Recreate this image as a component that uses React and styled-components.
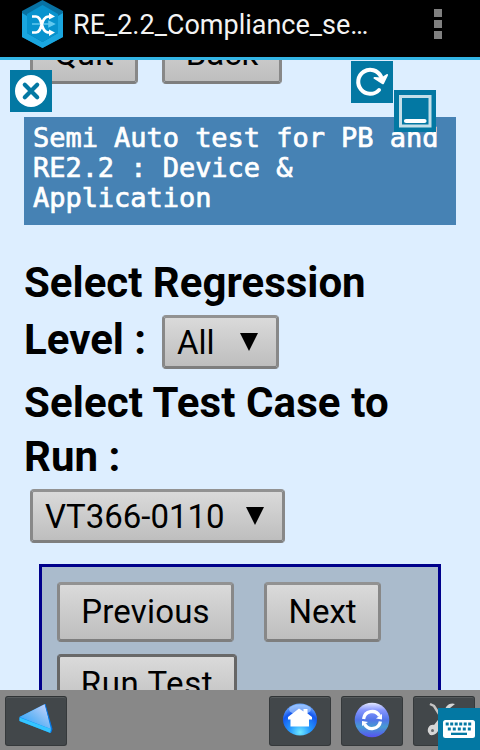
import React from 'react';
import styled, { createGlobalStyle } from 'styled-components';

const GlobalStyle = createGlobalStyle`
  * { box-sizing: border-box; }
  html, body { margin: 0; padding: 0; overflow: hidden; }
  svg { display: block; flex: none; }
`;

const Screen = styled.div`
  position: relative;
  display: flex;
  flex-direction: column;
  width: 480px;
  height: 750px;
  overflow: hidden;
  background: #def;
  color: #000;
  font-family: Roboto, 'Liberation Sans', sans-serif;
`;

const TitleBar = styled.header`
  display: flex;
  flex: none;
  height: 60px;
  padding: 0 38px 0 21px;
  background: #000;
  border-bottom: 3px solid #33b5e5;
`;

const Title = styled.h1`
  flex: 1;
  margin: 9px 0 0 9px;
  color: #f3f3f3;
  font-size: 27px;
  font-weight: 400;
  line-height: 32px;
  letter-spacing: ${(p) => p.$spacing}px;
  white-space: nowrap;
`;

const Overflow = styled.div`
  display: grid;
  gap: 3px;
  align-content: start;
  padding-top: 9px;
`;

const Dot = styled.span`
  width: 8px;
  height: 8px;
  background: #808080;
`;

const Content = styled.main`
  flex: 1;
  min-height: 0;
  overflow: hidden;
  padding: 0 24px;
`;

const ButtonRow = styled.div`
  display: flex;
  gap: ${(p) => p.$gap}px;
`;

const NavRow = styled(ButtonRow)`
  margin: -36px 0 33px 6px;
`;

const Button = styled.button`
  flex: none;
  width: ${(p) => p.$width}px;
  height: 60px;
  padding: 0;
  border: 3px solid;
  border-color: ${(p) => (p.$dark ? '#696969 #666 #606060' : '#929292 #888 #7e7e7e')};
  border-radius: 4px;
  background: linear-gradient(#dadada, #bebebe);
  color: #000;
  font: 400 33px/54px Roboto, 'Liberation Sans', sans-serif;
  letter-spacing: ${(p) => p.$spacing || 0}px;
  white-space: nowrap;
`;

const Picker = styled(Button)`
  display: flex;
  align-items: center;
  justify-content: space-between;
  height: 54px;
  padding: 0 18px 0 12px;
  line-height: 48px;
`;

const PickerValue = styled.span`
  padding-top: 2px;
`;

const Banner = styled.div`
  height: 108px;
  padding: 6px 0 0 9px;
  background: #4682b4;
  color: #fff;
  font: 400 27px/30px 'DejaVu Sans Mono', monospace;
  letter-spacing: -0.04px;
  white-space: pre;
  -webkit-text-stroke: 0.7px #fff;
`;

const Heading = styled.h2`
  margin: 0;
  font-size: 42px;
  font-weight: 700;
  line-height: 54px;
  letter-spacing: ${(p) => p.$spacing || 0}px;
  white-space: nowrap;
`;

const Fields = styled.section`
  padding-top: 31px;
`;

const LevelRow = styled.div`
  display: flex;
  align-items: flex-start;
  height: 66px;
  padding-top: 3px;
`;

const LevelLabel = styled(Heading)`
  width: 138px;
`;

const LevelPicker = styled(Picker)`
  margin-top: 2px;
`;

const CaseRow = styled.div`
  padding: 5px 0 0 6px;
`;

const Panel = styled.section`
  display: grid;
  gap: 12px;
  width: 402px;
  height: 180px;
  margin: 21px 0 0 15px;
  padding: 15px;
  align-content: start;
  border: 3px solid #00008b;
  background: #abc;
`;

const Toolbar = styled.footer`
  display: flex;
  flex: none;
  gap: 10px;
  height: 60px;
  padding: 6px 5px 4px;
  background: #888;
`;

const ToolButton = styled.button`
  display: block;
  width: 62px;
  height: 50px;
  margin: 0 ${(p) => (p.$first ? 'auto' : '0')} 0 0;
  padding: 0;
  border: 1px solid #35393b;
  border-top-color: #303436;
  border-radius: 3px;
  background: #42474a;
  box-shadow: inset 0 1px #555a5c;
`;

const Floating = styled.div`
  position: absolute;
  left: ${(p) => p.$x}px;
  top: ${(p) => p.$y}px;
  width: 42px;
  height: 42px;
  background: #0378a3;
`;

const AppLogo = () => (
  <svg width="43" height="48" viewBox="0 0 43 48">
    <path d="M21.5 0L42 11V37L21.5 48L1 37V11Z" fill="#0872a3" />
    <path d="M1 13L6 16V33L21.5 42L37 33V16L42 13V37L21.5 48L1 37Z" fill="#1aa6df" />
    <path d="M21.5 5L37 14V33L21.5 42L6 33V14Z" fill="#0793ce" />
    <path d="M11 24H31M28 21.5L33 24L28 26.5Z" fill="#62c9ef" stroke="#62c9ef" strokeWidth="1.6" />
    <path d="M11 16.5H15C22 16.5 19 32.5 28 32.5H31M11 32.5H15C22 32.5 19 16.5 28 16.5H31" fill="none" stroke="#fff" strokeWidth="2.7" />
    <path d="M28 13L34 16.5L28 19.5ZM28 29.5L34 32.5L28 36Z" fill="#fff" />
  </svg>
);

const Triangle = () => (
  <svg width="18" height="18" viewBox="0 0 18 18"><path d="M0 0H18L9 18Z" /></svg>
);

const CloseIcon = () => (
  <svg width="42" height="42" viewBox="0 0 42 42">
    <circle cx="21" cy="21" r="16" fill="#fff" />
    <path d="M14.8 14.8L27.2 27.2M27.2 14.8L14.8 27.2" stroke="#0378a3" strokeWidth="4.2" strokeLinecap="round" />
  </svg>
);

const ReloadIcon = () => (
  <svg width="42" height="42" viewBox="0 0 42 42">
    <path d="M28 29A12 12 0 1 1 30 15.5" fill="none" stroke="#fff" strokeWidth="4" strokeLinecap="round" />
    <path d="M23.5 17L32 22.3L36 14L30.5 17.5Z" fill="#fff" stroke="#fff" strokeWidth="2" strokeLinejoin="round" />
  </svg>
);

const MinimizeIcon = () => (
  <svg width="42" height="42" viewBox="0 0 42 42">
    <rect x="6.5" y="6.5" width="29.5" height="29.5" fill="none" stroke="#c4dfe9" strokeWidth="3" />
    <path d="M12 31H30.5" stroke="#fff" strokeWidth="4.2" strokeLinecap="round" />
  </svg>
);

const topKeys = [9, 13.5, 18, 22.5, 27, 31.5];
const middleKeys = [10.5, 15.5, 20.5, 25.5, 30.5];
const KeyboardIcon = () => (
  <svg width="42" height="42" viewBox="0 0 42 42">
    <rect x="5" y="12" width="32" height="18" rx="2.5" fill="#fff" />
    <g fill="#0378a3">
      {topKeys.map((x) => <rect key={x} x={x - 1.3} y="14.5" width="3" height="3" />)}
      {middleKeys.map((x) => <rect key={x} x={x - 0.7} y="19.5" width="3" height="3" />)}
      <rect x="13" y="24.7" width="16" height="2.3" />
    </g>
  </svg>
);

const BackIcon = () => (
  <svg width="60" height="48" viewBox="0 0 60 48">
    <defs>
      <linearGradient id="glass" x1="0" y1="1" x2="1" y2="0">
        <stop offset="0" stopColor="#159bff" /><stop offset="0.5" stopColor="#73b9f5" /><stop offset="1" stopColor="#d2d6ff" />
      </linearGradient>
    </defs>
    <path d="M13.5 20L39 7L46 32L44.5 36L13.5 24Z" fill="#078ff5" />
    <path d="M13.5 20L39 7L44.8 32Z" fill="url(#glass)" />
    <path d="M13.5 20.5L44.8 32L44.5 36L13.5 24Z" fill="#35c5ff" />
    <path d="M39 7L46 32L44.8 35.5" fill="none" stroke="#0872df" strokeWidth="1" />
  </svg>
);

const HomeIcon = () => (
  <svg width="60" height="48" viewBox="0 0 60 48">
    <defs>
      <radialGradient id="homeOrb" cx="50%" cy="90%" r="85%">
        <stop offset="0" stopColor="#71eaff" /><stop offset="0.35" stopColor="#269cff" /><stop offset="0.75" stopColor="#1558ef" /><stop offset="1" stopColor="#69a7ff" />
      </radialGradient>
    </defs>
    <ellipse cx="30" cy="22.5" rx="17" ry="16" fill="url(#homeOrb)" />
    <ellipse cx="30" cy="12.5" rx="11" ry="5" fill="#b5d3ff" opacity="0.6" />
    <path d="M18 20L29 11.5L33.5 14.5V12H37.5V16.5L42 20V22.5H39V29.5H20.5V22.5H18Z" fill="#fff" />
  </svg>
);

const SyncIcon = () => (
  <svg width="60" height="48" viewBox="0 0 60 48">
    <defs>
      <linearGradient id="syncOrb" x1="0" y1="0" x2="0" y2="1">
        <stop offset="0" stopColor="#e5e9ff" /><stop offset="0.22" stopColor="#8595ff" /><stop offset="0.5" stopColor="#5174e8" /><stop offset="0.7" stopColor="#479bd2" /><stop offset="1" stopColor="#5750f2" />
      </linearGradient>
    </defs>
    <circle cx="30" cy="23" r="17.3" fill="url(#syncOrb)" />
    <path d="M21.6 22A8.5 8.5 0 0 1 37.5 19M38.4 24.5A8.5 8.5 0 0 1 22.5 27" fill="none" stroke="#fff" strokeWidth="3.3" />
    <path d="M34 21.5L40 17V22.5ZM26 25L20 24V29Z" fill="#fff" />
  </svg>
);

const ToolsIcon = () => (
  <svg width="60" height="48" viewBox="0 0 60 48">
    <path d="M16 7L20 9L25 17L41 34" fill="none" stroke="#c4c4c4" strokeWidth="2.5" />
    <path d="M14 35C13 31 16 27 20 28L31 14C31 9 36 5 41 7L36 11L37 15L42 15C38 19 35 19 33 19L25 30C25 35 21 39 16 38Z" fill="#d6d6d6" />
    <circle cx="18.5" cy="33.5" r="1.5" fill="#666a6c" />
  </svg>
);

export default function App() {
  return (
    <Screen>
      <GlobalStyle />
      <TitleBar>
        <AppLogo />
        <Title $spacing={0}>RE_2.2_Compliance_se…</Title>
        <Overflow><Dot /><Dot /><Dot /></Overflow>
      </TitleBar>
      <Content>
        <NavRow $gap={24}>
          <Button $width={108}>Quit</Button>
          <Button $width={120}>Back</Button>
        </NavRow>
        <Banner>{'Semi Auto test for PB and\nRE2.2 : Device &\nApplication'}</Banner>
        <Fields>
          <Heading>Select Regression</Heading>
          <LevelRow>
            <LevelLabel>Level :</LevelLabel>
            <LevelPicker $width={117}><PickerValue>All</PickerValue><Triangle /></LevelPicker>
          </LevelRow>
          <Heading $spacing={0.1}>Select Test Case to</Heading>
          <Heading>Run :</Heading>
          <CaseRow>
            <Picker $width={255}><PickerValue>VT366-0110</PickerValue><Triangle /></Picker>
          </CaseRow>
        </Fields>
        <Panel>
          <ButtonRow $gap={30}>
            <Button $width={177} $spacing={0.2}>Previous</Button>
            <Button $width={117}>Next</Button>
          </ButtonRow>
          <ButtonRow><Button $width={180} $spacing={0.6} $dark>Run Test</Button></ButtonRow>
        </Panel>
      </Content>
      <Toolbar>
        <ToolButton $first aria-label="Back"><BackIcon /></ToolButton>
        <ToolButton aria-label="Home"><HomeIcon /></ToolButton>
        <ToolButton aria-label="Refresh"><SyncIcon /></ToolButton>
        <ToolButton aria-label="Settings"><ToolsIcon /></ToolButton>
      </Toolbar>
      <Floating $x={10} $y={70}><CloseIcon /></Floating>
      <Floating $x={351} $y={61}><ReloadIcon /></Floating>
      <Floating $x={394} $y={90}><MinimizeIcon /></Floating>
      <Floating $x={438} $y={708}><KeyboardIcon /></Floating>
    </Screen>
  );
}
